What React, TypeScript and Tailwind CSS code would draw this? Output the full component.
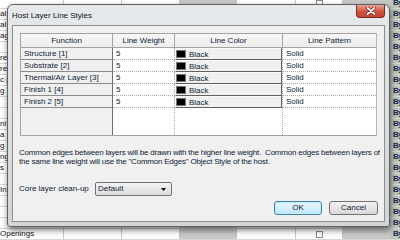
import React from "react";

const leftFrags = ["", "al", "al", "ag", "", "re", "re", "c [", "g [", "", "", "ni", "a", "g", "ng", "s", "", "In", "", "", "", "Openings"];

function BgRow({ frag }: { frag: string }) {
  return (
    <div className="flex h-[11px] shrink-0 border-b border-[#d6d6d6] text-[8px] leading-[10px] text-[#111]">
      <div className="w-[64px] shrink-0 border-r border-[#c8c8c8] overflow-hidden whitespace-nowrap">{frag}</div>
      <div className="w-[58px] shrink-0 border-r border-[#c8c8c8]" />
      <div className="w-[58px] shrink-0 border-r border-[#c8c8c8]" />
      <div className="w-[57px] shrink-0 border-r border-[#c8c8c8] bg-[#c9c9c9]" />
      <div className="w-[59px] shrink-0 border-r border-[#c8c8c8]" />
      <div className="w-[47px] shrink-0 border-r border-[#c8c8c8] flex items-center justify-center">
        <div className="w-[7px] h-[7px] border border-[#8a8a8a] bg-white" />
      </div>
      <div className="w-[47px] shrink-0 border-r border-[#c8c8c8] bg-[#c9c9c9]" />
      <div className="flex-1 bg-[#bfc7bd] pl-[3px] text-[#1a2a50] font-bold tracking-[-0.5px] overflow-hidden">By</div>
    </div>
  );
}

const rows = [
  { f: "Structure [1]" },
  { f: "Substrate [2]" },
  { f: "Thermal/Air Layer [3]" },
  { f: "Finish 1 [4]" },
  { f: "Finish 2 [5]" },
];

function CloseGlyph() {
  return (
    <svg width="10" height="8" viewBox="0 0 10 8">
      <path d="M1.5 1 L8.5 7 M8.5 1 L1.5 7" stroke="#5a1a10" strokeWidth="3" strokeLinecap="round" />
      <path d="M1.5 1 L8.5 7 M8.5 1 L1.5 7" stroke="#ffffff" strokeWidth="1.8" strokeLinecap="round" />
    </svg>
  );
}

export default function App() {
  return (
    <div className="relative w-[400px] h-[240px] overflow-hidden bg-white font-['Liberation_Sans',Arial,sans-serif]">
      <div className="flex flex-col -mt-[2px]">
        {leftFrags.map((f, i) => (
          <BgRow key={i} frag={f} />
        ))}
      </div>

      <div className="absolute left-[7px] top-[4px] w-[383px] h-[223px] rounded-t-[6px] rounded-b-[3px] border border-[#5e6064] bg-gradient-to-b from-[#e6e9ec] to-[#d2d5d8] shadow-[1px_3px_6px_rgba(0,0,0,0.55)] flex flex-col px-[4px] pb-[4px] text-[#0f1c36]">
        <div className="h-[20px] shrink-0 flex justify-between">
          <div className="text-[8px] leading-[20px] text-[#111] pt-[1px]">Host Layer Line Styles</div>
          <div className="w-[29px] h-[13px] rounded-b-[4px] border border-t-0 border-[#7a2a1e] bg-gradient-to-b from-[#e7a295] via-[#cf5744] to-[#c4432f] flex items-center justify-center">
            <CloseGlyph />
          </div>
        </div>

        <div className="flex-1 bg-[#f0f0f0] border border-[#8c8e90] flex flex-col pt-[7px] px-[7px] text-[8px]">
          <div className="h-[103px] shrink-0 flex flex-col border-l border-t border-b border-[#a3a3a3] border-r border-r-[#b8b8b8] border-r-dotted bg-white">
            <div className="flex h-[14px] shrink-0 bg-gradient-to-b from-[#f7f7f7] to-[#ededed] border-b border-[#a3a3a3] leading-[13px] text-center">
              <div className="w-[92px] shrink-0 border-r border-[#a3a3a3]">Function</div>
              <div className="w-[62px] shrink-0 border-r border-[#a3a3a3]">Line Weight</div>
              <div className="w-[108px] shrink-0 border-r border-[#a3a3a3]">Line Color</div>
              <div className="flex-1">Line Pattern</div>
            </div>
            {rows.map((r, i) => (
              <div key={i} className="flex h-[12px] shrink-0 leading-[11px]">
                <div className="w-[92px] shrink-0 bg-[#f0f0f0] border-b border-b-[#8a8a8a] border-r border-r-[#6e6e6e] pl-[3px] whitespace-nowrap">{r.f}</div>
                <div className="w-[62px] shrink-0 border-b border-dotted border-[#a8a8a8] border-r pl-[3px]">5</div>
                <div className="w-[108px] shrink-0 border-r border-dotted border-[#a8a8a8]">
                  <div className="h-full flex items-center bg-[#f0f0f0] border border-t-[#fafafa] border-l-[#fafafa] border-b-[#5f5f5f] border-r-[#5f5f5f] border-solid">
                    <div className="w-[10px] h-[8px] bg-black border border-[#777]" />
                    <span className="ml-[3px] leading-[9px]">Black</span>
                  </div>
                </div>
                <div className="flex-1 border-b border-dotted border-[#a8a8a8] pl-[3px]">Solid</div>
              </div>
            ))}
            <div className="flex flex-1">
              <div className="w-[92px] shrink-0 bg-[#f0f0f0] border-r border-[#6e6e6e]" />
              <div className="w-[62px] shrink-0 border-r border-dotted border-[#a8a8a8]" />
              <div className="w-[108px] shrink-0 border-r border-dotted border-[#a8a8a8]" />
              <div className="flex-1" />
            </div>
          </div>

          <div className="mt-[12px] leading-[9px] whitespace-nowrap -ml-[1px] tracking-[-0.22px]">
            Common edges between layers will be drawn with the higher line weight.&nbsp; Common edges between layers of
            <br />
            the same line weight will use the "Common Edges" Object Style of the host.
          </div>

          <div className="mt-[16px] flex items-center h-[14px] -ml-[1px]">
            <div className="w-[76px] shrink-0">Core layer clean-up</div>
            <div className="w-[77px] h-[14px] rounded-[2px] border border-[#707070] bg-gradient-to-b from-[#f4f4f4] to-[#dcdcdc] flex items-center justify-between pl-[2px] pr-[5px]">
              <span>Default</span>
              <svg width="5" height="3" viewBox="0 0 5 3"><path d="M0 0 H5 L2.5 3 Z" fill="#000" /></svg>
            </div>
          </div>

          <div className="mt-[5px] flex justify-end gap-[7px] -mr-[1px]">
            <div className="w-[48px] h-[14px] rounded-[3px] border border-[#3c7fb1] bg-gradient-to-b from-[#eaf6fd] to-[#bee6fd] flex items-center justify-center shadow-[inset_0_0_0_1px_#c9ecfc]">OK</div>
            <div className="w-[49px] h-[14px] rounded-[3px] border border-[#707070] bg-gradient-to-b from-[#f2f2f2] to-[#d9d9d9] flex items-center justify-center">Cancel</div>
          </div>
        </div>
      </div>
    </div>
  );
}
